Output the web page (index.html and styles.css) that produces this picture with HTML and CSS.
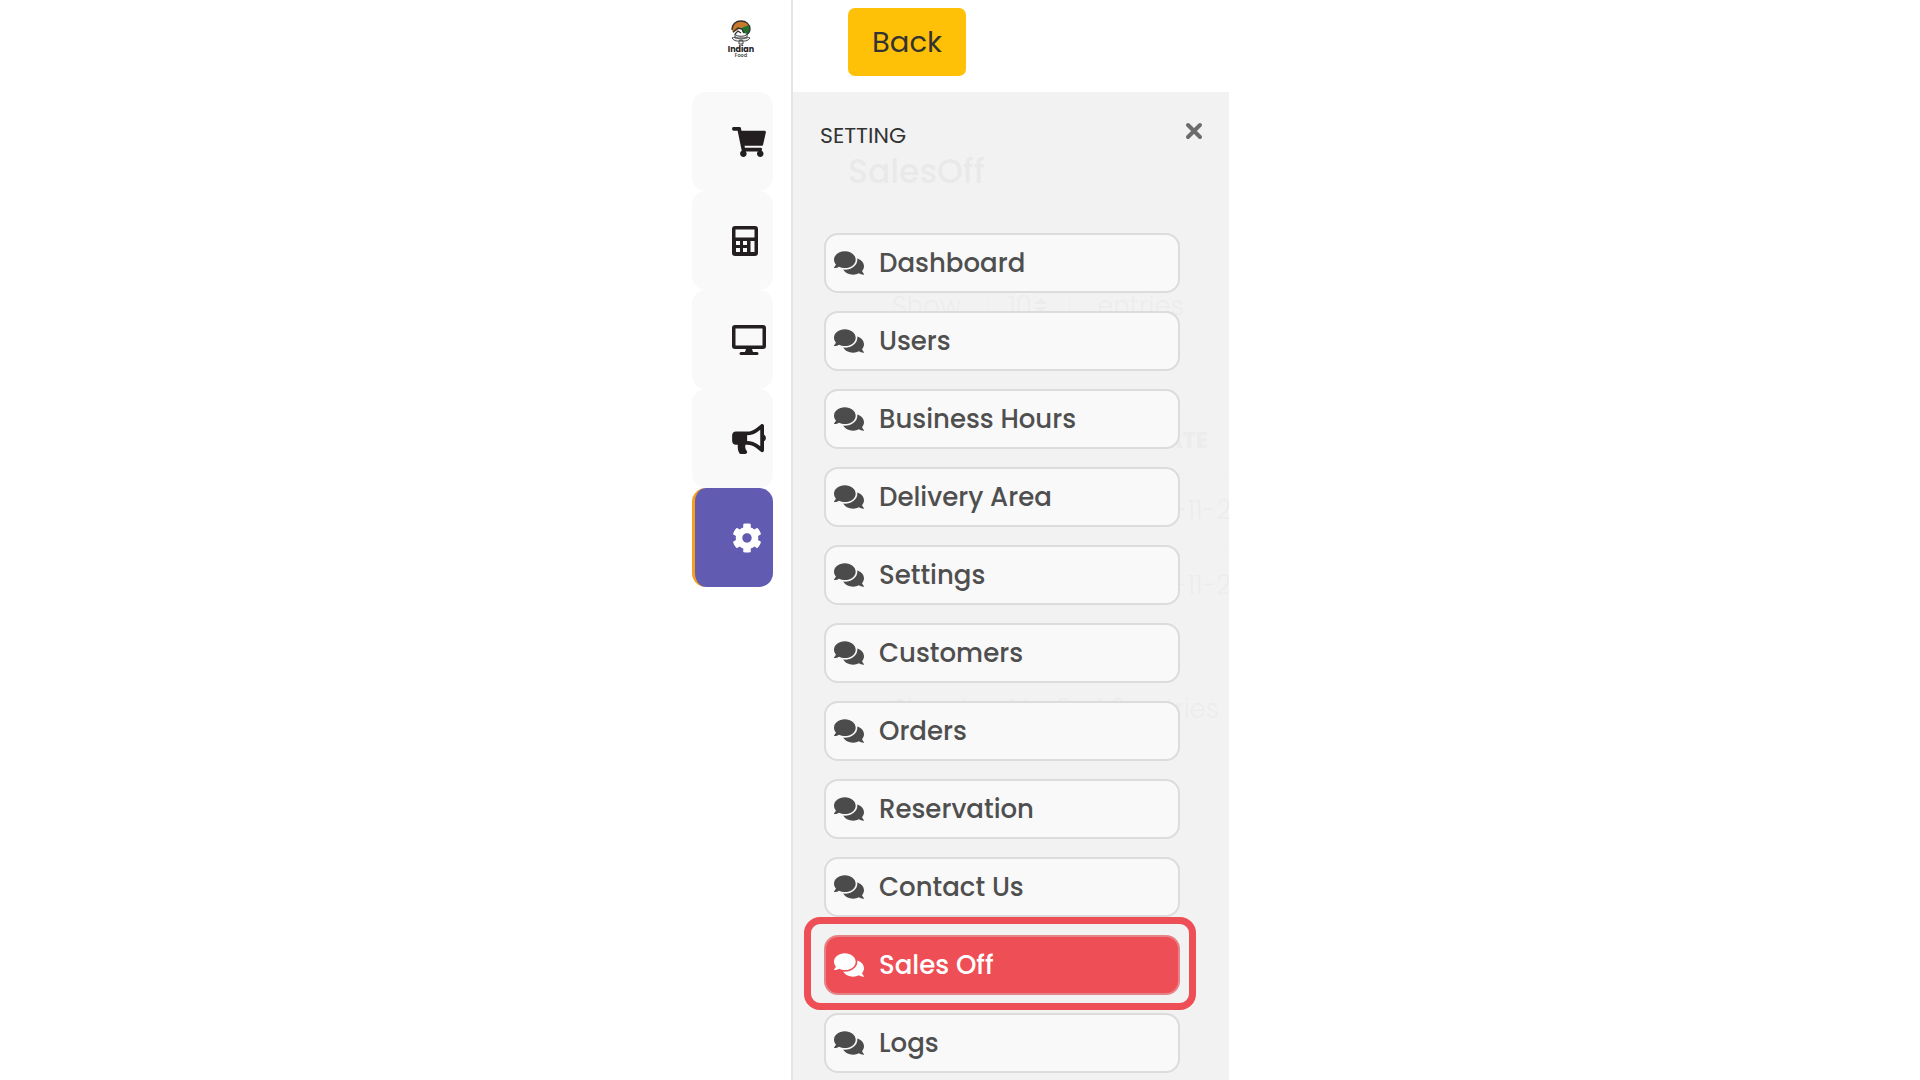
FILE: index.html
```html
<!DOCTYPE html>
<html lang="en">
<head>
<meta charset="utf-8">
<meta name="viewport" content="width=device-width, initial-scale=1">
<title>Sales Off</title>
<link rel="stylesheet" href="styles.css">
</head>
<body>
<svg class="sprite" aria-hidden="true">
  <symbol id="comments" viewBox="0 0 576 512"><path d="M416 192c0-88.4-93.1-160-208-160S0 103.6 0 192c0 34.3 14.1 65.9 38 92-13.4 30.2-35.5 54.2-35.8 54.5-2.2 2.3-2.8 5.7-1.5 8.7S4.8 352 8 352c36.6 0 66.9-12.3 88.7-25 32.2 15.7 70.3 25 111.3 25 114.9 0 208-71.6 208-160zm122 220c23.9-26 38-57.7 38-92 0-66.9-53.5-124.2-129.3-148.1.9 6.6 1.3 13.3 1.3 20.1 0 105.9-107.7 192-240 192-10.8 0-21.3-.8-31.7-1.9C207.8 439.6 281.8 480 368 480c41 0 79.1-9.2 111.3-25 21.8 12.7 52.1 25 88.7 25 3.2 0 6.1-1.9 7.3-4.8 1.3-2.9.7-6.3-1.5-8.7-.3-.3-22.4-24.2-35.8-54.5z"/></symbol>
</svg>
<div class="app">
  <nav class="rail" aria-label="Main">
    <a class="logo" href="#" aria-label="Indian Food">
      <svg viewBox="0 0 28 38" width="28" height="38">
        <path d="M5 9C5 3 9 1 14 1c4 0 7 1 8 5l-8 2-5 3-3 2z" fill="#c9792b"/>
        <path d="M14 8l8-3c2 4 1 7-1 9l-5-1z" fill="#23702c"/>
        <path d="M5 10c0-6 4-9 9-9s9 3 9 8c0 3-2 5-4 6M6 12l5-4 4 1 2 4M8 14l3-3 3 2" fill="none" stroke="#333" stroke-width="1.3"/>
        <path d="M8 14c1 3 11 3 12 0v4H8zM5 18c4-2 5 1 9 1s5-3 9-1c-2 3-6 4-9 2-3 2-7 1-9-2zM12 21h4v3h-4z" fill="#eee" stroke="#444" stroke-width="1"/>
        <text class="logo-name" x="14" y="32" text-anchor="middle">Indian</text>
        <text class="logo-sub" x="14" y="37" text-anchor="middle">Food</text>
      </svg>
    </a>
    <a class="tile" href="#" aria-label="Orders"><svg width="34" height="30" viewBox="0 0 576 512"><path d="M528.12 301.319l47.273-208C578.806 78.301 567.391 64 551.99 64H159.208l-9.166-44.81C147.758 8.021 137.93 0 126.529 0H24C10.745 0 0 10.745 0 24v16c0 13.255 10.745 24 24 24h69.883l70.248 343.435C147.325 417.1 136 435.222 136 456c0 30.928 25.072 56 56 56s56-25.072 56-56c0-15.674-6.447-29.835-16.824-40h209.647C430.447 426.165 424 440.326 424 456c0 30.928 25.072 56 56 56s56-25.072 56-56c0-22.172-12.888-41.332-31.579-50.405l5.517-24.276c3.413-15.018-8.002-29.319-23.403-29.319H218.117l-6.545-32h293.145c11.206 0 20.92-7.754 23.403-18.681z"/></svg></a>
    <a class="tile" href="#" aria-label="Calculator"><svg width="26" height="30" viewBox="0 0 26 30"><path fill-rule="evenodd" d="M3 0h20a3 3 0 0 1 3 3v24a3 3 0 0 1-3 3H3a3 3 0 0 1-3-3V3a3 3 0 0 1 3-3zM3.500 3.500v8h19v-8zM4 15v4h4v-4zM11 15v4h4v-4zM4 22v4h4v-4zM11 22v4h4v-4zM18.500 15v11h4V15z"/></svg></a>
    <a class="tile" href="#" aria-label="Display"><svg width="34" height="30" viewBox="0 0 34 30"><path fill-rule="evenodd" d="M3 0h28a3 3 0 0 1 3 3v18a3 3 0 0 1-3 3H20l1 3h4a1.500 1.500 0 0 1 0 3H9a1.500 1.500 0 0 1 0-3h4l1-3H3a3 3 0 0 1-3-3V3a3 3 0 0 1 3-3zM3.500 3.500v17h27v-17z"/></svg></a>
    <a class="tile" href="#" aria-label="Marketing"><svg width="34" height="30" viewBox="0 0 576 512"><path d="M576 240c0-23.63-12.95-44.04-32-55.12V32.01C544 23.26 537.02 0 512 0c-7.12 0-14.19 2.38-19.98 7.02l-85.03 68.03C364.28 109.19 310.66 128 256 128H64c-35.35 0-64 28.65-64 64v96c0 35.35 28.65 64 64 64h33.7c-1.39 10.48-2.18 21.14-2.18 32 0 39.77 9.26 77.35 25.56 110.94 5.19 10.69 16.52 17.06 28.4 17.06h74.28c26.05 0 41.69-29.84 25.9-50.56-16.4-21.52-26.15-48.36-26.15-77.44 0-11.11 1.62-21.79 4.41-32H256c54.66 0 108.28 18.81 150.98 52.95l85.03 68.03a32.023 32.023 0 0 0 19.98 7.02c24.92 0 32-22.78 32-32V295.13C563.05 284.04 576 263.63 576 240zm-96 141.42l-33.05-26.44C392.95 311.78 325.12 288 256 288v-96c69.12 0 136.95-23.78 190.95-66.98L480 98.580v282.84z"/></svg></a>
    <a class="tile tile-active" href="#" aria-label="Setting"><svg width="30" height="30" viewBox="0 0 512 512"><path d="M487.400 315.700l-42.600-24.600c4.300-23.200 4.300-47 0-70.200l42.600-24.600c4.900-2.800 7.100-8.600 5.500-14-11.100-35.600-30-67.800-54.700-94.600-3.800-4.100-10-5.100-14.800-2.300L380.800 110c-17.900-15.400-38.500-27.300-60.800-35.100V25.800c0-5.600-3.900-10.500-9.400-11.700-36.700-8.200-74.300-7.800-109.200 0-5.500 1.200-9.400 6.100-9.400 11.700V75c-22.200 7.900-42.800 19.800-60.800 35.100L88.700 85.500c-4.900-2.800-11-1.900-14.800 2.300-24.700 26.700-43.600 58.900-54.700 94.600-1.700 5.400.6 11.200 5.500 14L67.300 221c-4.300 23.200-4.300 47 0 70.200l-42.600 24.600c-4.900 2.800-7.100 8.600-5.500 14 11.100 35.600 30 67.800 54.700 94.600 3.800 4.100 10 5.100 14.800 2.300l42.600-24.600c17.900 15.400 38.500 27.300 60.800 35.100v49.200c0 5.600 3.900 10.500 9.400 11.700 36.700 8.200 74.300 7.800 109.200 0 5.500-1.200 9.400-6.100 9.400-11.700v-49.200c22.200-7.900 42.800-19.800 60.800-35.100l42.600 24.600c4.900 2.800 11 1.900 14.800-2.300 24.700-26.700 43.600-58.900 54.700-94.600 1.500-5.500-.7-11.300-5.600-14.100zM256 336c-44.100 0-80-35.900-80-80s35.900-80 80-80 80 35.900 80 80-35.900 80-80 80z"/></svg></a>
  </nav>
  <div class="main">
    <header class="topbar"><button class="back" type="button">Back</button></header>
    <div class="stage">
      <main class="page">
        <h1>SalesOff</h1>
        <section class="card">
          <label class="length">Show <span class="picker"><select><option>10</option></select><svg width="14" height="14" viewBox="0 0 14 14"><path d="M0 6l7-6 7 6zM0 9h14l-7 5z"/></svg></span> entries</label>
          <table>
            <thead><tr><th>DATE</th></tr></thead>
            <tbody><tr><td>-11-2</td></tr><tr><td>-11-2</td></tr></tbody>
          </table>
          <p class="info">Showing 1 to 2 of 2 entries</p>
        </section>
      </main>
      <aside class="drawer">
        <div class="drawer-head">
          <h2>SETTING</h2>
          <button class="close" type="button" aria-label="Close"><svg width="18" height="18" viewBox="0 0 18 18"><path d="M3 3l12 12M15 3L3 15" stroke="currentColor" stroke-width="4" stroke-linecap="round"/></svg></button>
        </div>
        <nav class="menu" aria-label="Setting">
          <a class="item" href="#"><svg><use href="#comments"/></svg>Dashboard</a>
          <a class="item" href="#"><svg><use href="#comments"/></svg>Users</a>
          <a class="item" href="#"><svg><use href="#comments"/></svg>Business Hours</a>
          <a class="item" href="#"><svg><use href="#comments"/></svg>Delivery Area</a>
          <a class="item" href="#"><svg><use href="#comments"/></svg>Settings</a>
          <a class="item" href="#"><svg><use href="#comments"/></svg>Customers</a>
          <a class="item" href="#"><svg><use href="#comments"/></svg>Orders</a>
          <a class="item" href="#"><svg><use href="#comments"/></svg>Reservation</a>
          <a class="item" href="#"><svg><use href="#comments"/></svg>Contact Us</a>
          <a class="item item-active" href="#" aria-current="page"><svg><use href="#comments"/></svg>Sales Off</a>
          <a class="item" href="#"><svg><use href="#comments"/></svg>Logs</a>
        </nav>
      </aside>
    </div>
  </div>
</div>
</body>
</html>
```
FILE: styles.css
```css
* { box-sizing: border-box; }

body {
  margin: 0;
  background: #fff;
  color: #212529;
  font-family: Poppins, Inter, "Open Sans", sans-serif;
}

h1, h2, p { margin: 0; }
a { color: inherit; text-decoration: none; }
button { border: 0; font: inherit; cursor: pointer; }
.sprite { display: none; }

.app {
  display: flex;
  max-width: 538px;
  min-height: 100vh;
  margin: 0 auto;
}

/* Icon rail */
.rail {
  flex: none;
  width: 102px;
  padding: 0 18px 0 1px;
  border-right: 2px solid #e5e5e5;
}

.logo {
  display: flex;
  height: 92px;
  padding: 20px 0 0 35px;
}

.logo svg { overflow: visible; }
.logo-name { font-size: 8px; font-weight: 700; fill: #222; }
.logo-sub { font-size: 5px; font-weight: 600; fill: #444; }

.tile {
  display: flex;
  align-items: center;
  height: 99px;
  padding-left: 40px;
  border-radius: 14px;
  background: #f9f9f9;
  fill: #231f20;
}

.tile-active {
  padding-left: 37px;
  border-left: 3px solid #f5a01d;
  background: #615bb2;
  fill: #fff;
}

/* Main column */
.main {
  display: flex;
  flex: 1;
  flex-direction: column;
  min-width: 0;
}

.topbar {
  height: 92px;
  padding: 8px 55px;
}

.back {
  height: 68px;
  padding: 0 24px;
  border-radius: 7px;
  background: #ffc107;
  color: #333;
  font-size: 29px;
}

.stage {
  position: relative;
  flex: 1;
  overflow: hidden;
}

/* Listing page, seen through the drawer */
.page { padding: 56px 0 0 55px; }

.page h1 {
  font-size: 33px;
  font-weight: 500;
  line-height: 48px;
}

.card {
  margin-top: 57px;
  padding: 24px 12px 78px 44px;
  background: #fff;
  color: #666;
  font-size: 26px;
  font-weight: 300;
  white-space: nowrap;
}

.length {
  display: flex;
  align-items: center;
  gap: 27px;
  height: 58px;
}

.picker {
  position: relative;
  flex: none;
}

.picker svg {
  position: absolute;
  top: 21px;
  right: 22px;
  fill: #666;
}

.length select {
  width: 82px;
  height: 58px;
  padding: 0 19px;
  border: 1px solid #aaa;
  background: #fff;
  color: #666;
  font: inherit;
  appearance: none;
}

table {
  width: calc(100% + 14px);
  margin-top: 74px;
  border-collapse: collapse;
  text-align: right;
}

th {
  height: 64px;
  padding: 0 23px 0 0;
  font-size: 22px;
  font-weight: 800;
}

td {
  height: 75px;
  padding: 0;
  border-top: 1px solid #ccc;
}

.info {
  padding-top: 62px;
  line-height: 48px;
  text-align: right;
}

/* Settings drawer */
.drawer {
  position: absolute;
  inset: 0;
  background: rgba(241, 241, 241, 0.96);
}

.drawer-head {
  display: flex;
  align-items: flex-start;
  justify-content: space-between;
  height: 141px;
  padding: 28px 26px 0 27px;
}

.drawer-head h2 {
  padding-top: 1px;
  color: #333;
  font-size: 22px;
  font-weight: 400;
  line-height: 30px;
}

.close {
  display: flex;
  padding: 2px 0;
  background: none;
  color: #6c6c6c;
}

.menu {
  display: grid;
  gap: 18px;
  padding: 0 49px 8px 31px;
}

.item {
  position: relative;
  display: flex;
  align-items: center;
  gap: 15px;
  height: 60px;
  padding-left: 8px;
  border: 2px solid #dcdcdc;
  border-radius: 14px;
  background: #f9f9f9;
  color: #4f4f4f;
  font-size: 26px;
  font-weight: 500;
}

.item svg {
  width: 30px;
  height: 28px;
  fill: #4b4b4b;
}

.item-active {
  border-color: #e58388;
  background: #ee4e55;
  color: #fff;
}

.item-active svg { fill: #fff; }

.item-active::after {
  content: "";
  position: absolute;
  inset: -20px -18px -17px -22px;
  border: 7px solid #ee4e55;
  border-radius: 16px;
}
```
